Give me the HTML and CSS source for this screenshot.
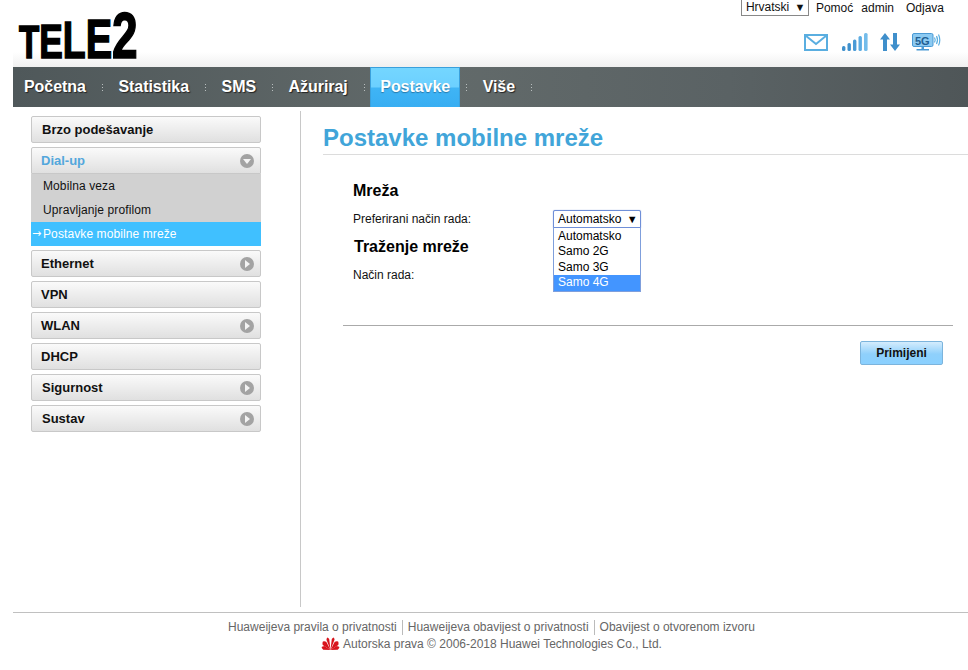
FILE: index.html
```html
<!DOCTYPE html>
<html lang="hr">
<head>
    <meta charset="UTF-8">
    <meta name="viewport" content="width=device-width, initial-scale=1.0">
    <title>Postavke mobilne mreže</title>
    <link rel="stylesheet" href="styles.css">
</head>
<body>
    <div class="page">
        <!-- Header -->
        <div class="header">
            <div class="logo"><span class="l1">T</span><span class="l2">E</span><span class="l3">L</span><span class="l4">E</span><span class="l5">2</span></div>
            <div class="header-right">
                <div class="top-links">
                    <div class="lang-box">Hrvatski <span class="lang-arrow">▼</span></div>
                    <a href="#">Pomoć</a>
                    <a href="#" class="admin">admin</a>
                    <a href="#" class="logout">Odjava</a>
                </div>
                <div class="status-icons">
                    <svg class="icon-mail" width="24" height="17" viewBox="0 0 24 17">
                        <rect x="1" y="1" width="22" height="15" fill="#fff" stroke="#5aaee0" stroke-width="2"/>
                        <path d="M1.5 1.5 L12 10 L22.5 1.5" fill="none" stroke="#5aaee0" stroke-width="2"/>
                    </svg>
                    <svg class="icon-signal" width="26" height="18" viewBox="0 0 26 18">
                        <rect x="0" y="13" width="3.4" height="5" rx="1.5" fill="#3f90cc"/>
                        <rect x="5.5" y="10" width="3.4" height="8" rx="1.5" fill="#3f90cc"/>
                        <rect x="11" y="6.5" width="3.4" height="11.5" rx="1.5" fill="#4a9ad6"/>
                        <rect x="16.5" y="3" width="3.4" height="15" rx="1.5" fill="#5cace2"/>
                        <rect x="22" y="0" width="3.6" height="18" rx="1.5" fill="#74bcea"/>
                    </svg>
                    <svg class="icon-updown" width="20" height="18" viewBox="0 0 20 18">
                        <path d="M5 0 L10 6.5 H7 V18 H3 V6.5 H0 Z" fill="#3f8fcb"/>
                        <path d="M15 18 L20 11.5 H17 V0 H13 V11.5 H10 Z" fill="#3f8fcb"/>
                    </svg>
                    <svg class="icon-5g" width="30" height="18" viewBox="0 0 30 18">
                        <rect x="0.5" y="0.5" width="20.5" height="13" rx="1.5" fill="#8ccaf2" stroke="#4a9ad4"/>
                        <text x="3" y="11.5" class="icon-5g-text">5G</text>
                        <rect x="9.5" y="13.5" width="2.5" height="2.5" fill="#4a9ad4"/>
                        <rect x="4.5" y="16" width="12.5" height="1.5" fill="#4a9ad4"/>
                        <path d="M22.5 4.5 Q23.9 7 22.5 9.5 M24.5 3 Q26.5 7 24.5 11 M26.5 1.5 Q29.1 7 26.5 12.5" fill="none" stroke="#5aaee0" stroke-width="1.2"/>
                    </svg>
                </div>
            </div>
        </div>

        <!-- Main nav -->
        <div class="nav">
            <a href="#" class="nav-item">Početna</a><span class="nav-sep"></span>
            <a href="#" class="nav-item">Statistika</a><span class="nav-sep"></span>
            <a href="#" class="nav-item">SMS</a><span class="nav-sep"></span>
            <a href="#" class="nav-item">Ažuriraj</a><span class="nav-sep"></span>
            <a href="#" class="nav-item active">Postavke</a><span class="nav-sep"></span>
            <a href="#" class="nav-item">Više</a><span class="nav-sep"></span>
        </div>

        <div class="main">
            <!-- Left menu -->
            <div class="sidebar">
                <div class="menu-item">Brzo podešavanje</div>
                <div class="menu-group">
                    <div class="menu-item open">Dial-up <span class="menu-arrow down"></span></div>
                    <div class="sub-menu">
                        <div class="sub-item">Mobilna veza</div>
                        <div class="sub-item">Upravljanje profilom</div>
                        <div class="sub-item current"><span class="sub-arrow">→</span>Postavke mobilne mreže</div>
                    </div>
                </div>
                <div class="menu-item tight">Ethernet <span class="menu-arrow"></span></div>
                <div class="menu-item tight">VPN</div>
                <div class="menu-item tight">WLAN <span class="menu-arrow"></span></div>
                <div class="menu-item tight">DHCP</div>
                <div class="menu-item">Sigurnost <span class="menu-arrow"></span></div>
                <div class="menu-item">Sustav <span class="menu-arrow"></span></div>
            </div>

            <!-- Content -->
            <div class="content">
                <h1 class="page-title">Postavke mobilne mreže</h1>
                <div class="form-area">
                    <h2 class="section-title">Mreža</h2>
                    <div class="form-row">
                        <label class="form-label">Preferirani način rada:</label>
                        <div class="select-wrap">
                            <div class="select-box">Automatsko <span class="select-arrow">▼</span></div>
                            <ul class="select-list">
                                <li>Automatsko</li>
                                <li>Samo 2G</li>
                                <li>Samo 3G</li>
                                <li class="selected">Samo 4G</li>
                            </ul>
                        </div>
                    </div>
                    <h2 class="section-title second">Traženje mreže</h2>
                    <div class="form-row last">
                        <label class="form-label">Način rada:</label>
                    </div>
                </div>
                <div class="actions">
                    <button type="button" class="apply-btn">Primijeni</button>
                </div>
            </div>
        </div>

        <!-- Footer -->
        <div class="footer">
            <div class="footer-links">
                <a href="#">Huaweijeva pravila o privatnosti</a>
                <a href="#">Huaweijeva obavijest o privatnosti</a>
                <a href="#">Obavijest o otvorenom izvoru</a>
            </div>
            <div class="copyright">
                <svg width="19" height="14" viewBox="0 0 18 14">
                    <g fill="#d8141c">
                        <path d="M9 13 L7.6 2 Q8.2 0.4 9 0 Q9.8 0.4 10.4 2 Z" transform="rotate(-14 9 13)"/>
                        <path d="M9 13 L7.6 2 Q8.2 0.4 9 0 Q9.8 0.4 10.4 2 Z" transform="rotate(14 9 13)"/>
                        <path d="M9 13 L6.6 4 Q7.6 2 9 1.6 Q10.4 2 11.4 4 Z" transform="rotate(-42 9 13)"/>
                        <path d="M9 13 L6.6 4 Q7.6 2 9 1.6 Q10.4 2 11.4 4 Z" transform="rotate(42 9 13)"/>
                        <path d="M9 13 L7 6 Q8 4 9 3.6 Q10 4 11 6 Z" transform="rotate(-72 9 13)"/>
                        <path d="M9 13 L7 6 Q8 4 9 3.6 Q10 4 11 6 Z" transform="rotate(72 9 13)"/>
                    </g>
                </svg>
                <span>Autorska prava © 2006-2018 Huawei Technologies Co., Ltd.</span>
            </div>
        </div>
    </div>
</body>
</html>
```

FILE: styles.css
```css
/* Global Styles */
* { margin: 0; padding: 0; box-sizing: border-box; }
body {
    font-family: "Liberation Sans", Arial, sans-serif;
    font-size: 12px;
    color: #000;
    background: #fff;
}
a { color: inherit; text-decoration: none; }
.page { width: 968px; height: 670px; padding-left: 13px; overflow: hidden; }

/* Header */
.header {
    height: 67px;
    display: flex;
    justify-content: space-between;
    background: linear-gradient(to bottom, #fff 0, #fff 52px, #f0f0f0 67px);
}
.logo {
    width: 170px;
    height: 50px;
    margin: 11px 0 0 6px;
    line-height: 50px;
    font-weight: bold;
    color: #000;
    -webkit-text-stroke: 1.6px #000;
    white-space: nowrap;
    transform: scaleX(0.72);
    transform-origin: left;
}
.l1 { font-size: 46px; }
.l2 { font-size: 49px; }
.l3 { font-size: 52px; }
.l4 { font-size: 55px; }
.l5 { font-size: 64px; }
.header-right { display: flex; flex-direction: column; align-items: flex-end; }
.top-links {
    display: flex;
    align-items: center;
    height: 16px;
    padding-right: 24px;
    font-size: 12px;
    color: #111;
}
.top-links a { margin-left: 7px; }
.top-links .admin { margin-left: 8px; }
.top-links .logout { margin-left: 12px; }
.lang-box {
    width: 68px;
    height: 18px;
    margin-top: -2px;
    padding-left: 4px;
    line-height: 16px;
    background: #fff;
    border: 1px solid #888;
    white-space: nowrap;
}
.lang-arrow { font-size: 11px; margin-left: 2px; }
.status-icons {
    display: flex;
    align-items: flex-start;
    margin-top: 17px;
    padding-right: 26px;
    gap: 12px;
}
.icon-mail { margin: 1px 2px 0 0; }
.icon-5g-text { font-size: 11px; font-weight: bold; fill: #1f5f92; }

/* Main nav */
.nav {
    height: 40px;
    padding-left: 1px;
    display: flex;
    align-items: stretch;
    background: linear-gradient(to right, #4f585a 0, #626a6a 45%, #5a6264 75%, #4f5658 100%);
}
.nav-item {
    padding: 0 10px;
    line-height: 40px;
    font-size: 16px;
    font-weight: bold;
    letter-spacing: -0.05px;
    color: #fff;
    text-shadow: 1px 1px 1px #222;
}
.nav-item.active {
    background: linear-gradient(to bottom, #74d6ff 0, #6cd0ff 48%, #3fb4f5 52%, #38aef2 100%);
    border: 1px solid #3aa0dc;
    border-bottom: 0;
    padding: 0 9px;
    line-height: 38px;
    text-shadow: 0 1px 1px #2878a8;
}
.nav-sep {
    width: 12.5px;
    margin: 17px 0 16px;
    background: repeating-linear-gradient(to bottom, #b8bebe 0, #b8bebe 1px, transparent 1px, transparent 3px) center / 1px 100% no-repeat;
}

/* Layout */
.main { display: flex; height: 500px; padding-top: 4px; }
.sidebar {
    width: 288px;
    padding: 5px 39px 0 18px;
    border-right: 1px solid #c8c8c8;
    display: flex;
    flex-direction: column;
    gap: 4px;
}
.content { flex: 1; padding-left: 22px; }

/* Left menu */
.menu-item {
    height: 27px;
    padding-left: 10px;
    display: flex;
    align-items: center;
    justify-content: space-between;
    padding-right: 6px;
    line-height: 25px;
    font-size: 13px;
    font-weight: bold;
    color: #111;
    background: linear-gradient(to bottom, #fafafa 0, #e0e0e0 100%);
    border: 1px solid #c8c8c8;
    border-radius: 2px;
}
.menu-item.tight { padding-left: 9px; }
.menu-item.open { padding-left: 9px; color: #53a7dc; border-radius: 2px 2px 0 0; }
.menu-arrow {
    position: relative;
    width: 14px;
    height: 14px;
    border-radius: 50%;
    background: #a3a3a3;
}
.menu-arrow::after {
    content: "";
    position: absolute;
    left: 5px;
    top: 3px;
    border-left: 5px solid #f4f4f4;
    border-top: 4px solid transparent;
    border-bottom: 4px solid transparent;
}
.menu-arrow.down::after {
    left: 3px;
    top: 5px;
    border-top: 5px solid #f4f4f4;
    border-left: 4px solid transparent;
    border-right: 4px solid transparent;
    border-bottom: 0;
}
.sub-menu { background: #d1d1d1; }
.sub-item {
    position: relative;
    height: 24px;
    padding-left: 12px;
    line-height: 24px;
    font-size: 12px;
    color: #111;
    letter-spacing: 0.1px;
}
.sub-item.current { background: #40c0ff; color: #fff; }
.sub-arrow { position: absolute; left: 1px; top: 0; font-family: "DejaVu Sans", sans-serif; font-size: 11px; }

/* Content */
.page-title {
    height: 44px;
    padding-top: 15px;
    line-height: 24px;
    font-size: 24px;
    font-weight: bold;
    color: #41a5d9;
    border-bottom: 1px solid #dcdcdc;
}
.form-area { padding: 26px 0 0 30px; height: 170px; }
.section-title { font-size: 16px; font-weight: bold; line-height: 20px; color: #000; }
.section-title.second { margin: 9px 0 0 1px; }
.form-row { display: flex; align-items: center; margin-top: 9px; height: 18px; }
.form-row.last { margin-top: 9px; }
.form-label { width: 200px; font-size: 12px; color: #111; }
.select-wrap { position: relative; width: 88px; height: 18px; }
.select-box {
    height: 18px;
    padding-left: 4px;
    line-height: 16px;
    font-size: 12px;
    background: #fff;
    border: 1px solid #6f8fd8;
    box-shadow: 0 0 1px #6f8fd8;
    border-radius: 2px 2px 0 0;
    white-space: nowrap;
}
.select-arrow { font-size: 11px; margin-left: 2px; }
.select-list {
    position: absolute;
    left: 0;
    top: 18px;
    width: 88px;
    padding-top: 1px;
    list-style: none;
    background: #fff;
    border: 1px solid #7f9fdc;
    border-top: 0;
}
.select-list li { height: 15.33px; padding-left: 4px; line-height: 15px; font-size: 12px; }
.select-list li.selected { height: 16.5px; background: #4395ff; color: #fff; }
.actions {
    margin-left: 20px;
    margin-right: 15px;
    border-top: 1px solid #aaa;
    padding: 15px 10px 0 0;
    display: flex;
    justify-content: flex-end;
}
.apply-btn {
    width: 83px;
    height: 24px;
    font-family: inherit;
    font-size: 12px;
    font-weight: bold;
    color: #111;
    background: linear-gradient(to bottom, #d4ecfd 0, #8fd0fb 55%, #8ad0ff 100%);
    border: 1px solid #7cb4dc;
    border-radius: 2px;
}

/* Footer */
.footer {
    margin-top: 5px;
    height: 58px;
    padding: 7px 0 0 2px;
    border-top: 1px solid #c0c0c0;
    font-size: 12px;
    color: #666;
}
.footer-links { display: flex; justify-content: center; height: 15px; line-height: 15px; }
.footer-links a { padding: 0 5px; border-left: 1px solid #bbb; }
.footer-links a:first-child { border-left: 0; }
.copyright {
    display: flex;
    justify-content: center;
    align-items: center;
    gap: 3px;
    height: 18px;
}
```
